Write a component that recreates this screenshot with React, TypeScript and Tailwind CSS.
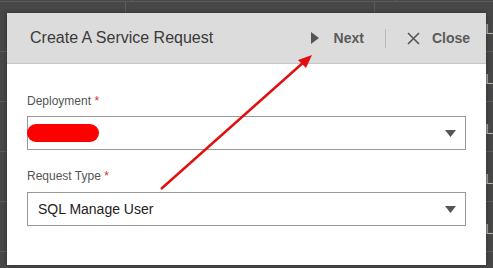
import { useState } from 'react';

const rows = ['', 'SQL', 'SQL', 'SQL', 'SQL', 'SQL'];

function Caret() {
  return (
    <svg width="11" height="7" viewBox="0 0 11 7" className="shrink-0">
      <path d="M0 0 L11 0 L5.5 7 Z" fill="#555" />
    </svg>
  );
}

export default function App() {
  const [requestType] = useState('SQL Manage User');

  return (
    <div className="relative w-[493px] h-[268px] overflow-hidden bg-[#474747] font-['Liberation_Sans',Arial,sans-serif]">
      {/* background table behind the dialog */}
      <div className="flex flex-col">
        <div className="flex h-[2px] border-b border-[#5d5d5d]">
          <div className="w-[133px] border-r border-[#5d5d5d]" />
          <div className="w-[263px] border-r border-[#5d5d5d]" />
        </div>
        {rows.slice(1).map((r, i) => (
          <div key={i} className="flex h-[50px] border-b border-[#5d5d5d]">
            <div className="w-[133px] border-r border-[#5d5d5d]" />
            <div className="w-[263px] border-r border-[#5d5d5d]" />
            <div className="flex-1 flex items-center pl-[90px] pt-[6px] text-[14px] text-[#bdbdbd]">{r}</div>
          </div>
        ))}
      </div>

      {/* dialog */}
      <div className="absolute left-[7px] top-[13px] w-[479px] h-[252px] bg-white shadow-[0_0_4px_rgba(0,0,0,0.4)]">
        <div className="flex items-center h-[51px] bg-[#dcdcdc] border-b border-[#c6c6c6] pl-[23px] pr-[16px]">
          <div className="text-[16px] text-[#3a3a3a] pb-[1px]">Create A Service Request</div>
          <div className="ml-auto flex items-center">
            <svg width="8" height="12" viewBox="0 0 8 12" className="mr-[15px]">
              <path d="M0 0 L8 6 L0 12 Z" fill="#555" />
            </svg>
            <span className="text-[14px] font-bold text-[#5a5a5a]">Next</span>
            <div className="w-px h-[19px] bg-[#b8b8b8] mx-[21px]" />
            <svg width="13" height="13" viewBox="0 0 13 13" className="mr-[12px]">
              <path d="M1 1 L12 12 M12 1 L1 12" stroke="#555" strokeWidth="1.6" />
            </svg>
            <span className="text-[14px] font-bold text-[#5a5a5a]">Close</span>
          </div>
        </div>

        <div className="flex flex-col px-[20px] pt-[29px]">
          <label className="text-[12px] leading-[16px] text-[#555]">
            Deployment <span className="text-[#d9302c]">*</span>
          </label>
          <div className="mt-[7px] h-[34px] border border-[#999] flex items-center pr-[9px]">
            <div className="ml-[-1px] w-[72px] h-[18px] rounded-full bg-[#ff0000]" />
            <div className="ml-auto"><Caret /></div>
          </div>

          <label className="mt-[18px] text-[12px] leading-[16px] text-[#555]">
            Request Type <span className="text-[#d9302c]">*</span>
          </label>
          <div className="mt-[8px] h-[34px] border border-[#999] flex items-center pl-[10px] pr-[9px]">
            <span className="text-[14px] text-[#222]">{requestType}</span>
            <div className="ml-auto"><Caret /></div>
          </div>
        </div>
      </div>

      {/* red annotation arrow */}
      <svg className="absolute left-0 top-0 pointer-events-none" width="493" height="268">
        <line x1="161" y1="189" x2="305" y2="61" stroke="#e01010" strokeWidth="2.5" />
        <path d="M312 55 L298 60 L306 68 Z" fill="#e01010" />
      </svg>
    </div>
  );
}
